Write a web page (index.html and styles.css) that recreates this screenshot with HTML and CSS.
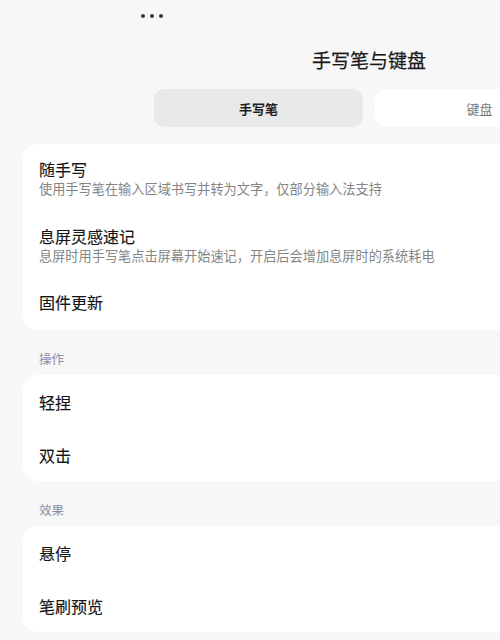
FILE: index.html
```html
<!DOCTYPE html>
<html lang="zh-CN">
<head>
<meta charset="utf-8">
<link rel="stylesheet" href="styles.css">
</head>
<body>
<div class="viewport">
<div class="page">
  <div class="topbar">
    <span class="dot"></span><span class="dot"></span><span class="dot"></span>
  </div>
  <h1 class="title">手写笔与键盘</h1>
  <div class="tabs">
    <div class="tab tab-active">手写笔</div>
    <div class="tab">键盘</div>
  </div>

  <div class="card card-first">
    <div class="row row-two">
      <div class="row-title">随手写</div>
      <div class="row-sub">使用手写笔在输入区域书写并转为文字，仅部分输入法支持</div>
    </div>
    <div class="row row-two">
      <div class="row-title">息屏灵感速记</div>
      <div class="row-sub">息屏时用手写笔点击屏幕开始速记，开启后会增加息屏时的系统耗电</div>
    </div>
    <div class="row row-tail">
      <div class="row-title">固件更新</div>
    </div>
  </div>

  <div class="section-label">操作</div>
  <div class="card">
    <div class="row"><div class="row-title">轻捏</div></div>
    <div class="row"><div class="row-title">双击</div></div>
  </div>

  <div class="section-label">效果</div>
  <div class="card">
    <div class="row"><div class="row-title">悬停</div></div>
    <div class="row"><div class="row-title">笔刷预览</div></div>
  </div>
</div>
</div>
</body>
</html>
```
FILE: styles.css
```css
html, body {
  margin: 0;
  padding: 0;
  background: #f7f7f7;
}
body {
  font-family: "Noto Sans CJK SC", "Noto Sans", sans-serif;
  color: #1a1a1a;
  height: 640px;
  overflow: hidden;
}
.viewport {
  width: 500px;
  height: 640px;
  overflow: hidden;
}
.page {
  width: 738px;
}
.topbar {
  height: 32px;
  display: flex;
  align-items: center;
  gap: 5px;
  padding-left: 141px;
}
.dot {
  width: 4px;
  height: 4px;
  border-radius: 50%;
  background: #3a3a3a;
}
.title {
  margin: 14px 0 0;
  font-size: 19px;
  line-height: 28px;
  font-weight: 400;
  -webkit-text-stroke: 0.25px #1a1a1a;
  text-align: center;
  color: #1a1a1a;
}
.tabs {
  margin-top: 15px;
  display: flex;
  justify-content: center;
  gap: 12px;
}
.tab {
  width: 209px;
  height: 38px;
  border-radius: 10px;
  background: #ffffff;
  display: flex;
  align-items: center;
  justify-content: center;
  font-size: 13px;
  color: #777777;
}
.tab-active {
  background: #e9e9e9;
  color: #1f1f1f;
  font-weight: 700;
}
.card {
  margin: 0 23px;
  background: #ffffff;
  border-radius: 14px;
}
.card-first {
  margin-top: 17px;
}
.row {
  height: 53px;
  padding: 0 16px;
  display: flex;
  flex-direction: column;
  justify-content: center;
}
.row-two {
  height: 67px;
}
.row-tail {
  height: 52px;
  justify-content: flex-start;
  padding-top: 13px;
  box-sizing: border-box;
}
.row-title {
  font-size: 16px;
  line-height: 22px;
  font-weight: 400;
  -webkit-text-stroke: 0.15px #141414;
  color: #141414;
}
.row-sub {
  font-size: 13.2px;
  line-height: 18px;
  color: #858585;
}
.section-label {
  padding: 21px 0 0 39px;
  height: 24px;
  font-size: 12.5px;
  line-height: 16px;
  color: #8c8ca6;
}
```
